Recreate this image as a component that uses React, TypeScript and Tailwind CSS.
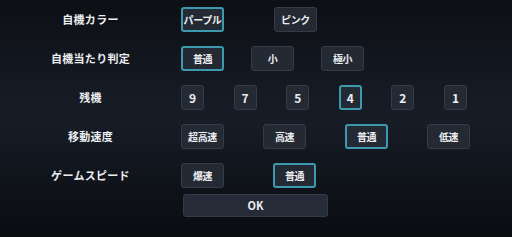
import React from "react";

type Row = {
  label: string;
  options: string[];
  selected: number;
  width: string;
  gap: string;
};

const rows: Row[] = [
  { label: "自機カラー", options: ["パープル", "ピンク"], selected: 0, width: "w-[43px]", gap: "gap-[50px]" },
  { label: "自機当たり判定", options: ["普通", "小", "極小"], selected: 0, width: "w-[43px]", gap: "gap-[27px]" },
  { label: "残機", options: ["9", "7", "5", "4", "2", "1"], selected: 3, width: "w-[23px]", gap: "gap-[29.6px]" },
  { label: "移動速度", options: ["超高速", "高速", "普通", "低速"], selected: 2, width: "w-[43px]", gap: "gap-[39px]" },
  { label: "ゲームスピード", options: ["爆速", "普通"], selected: 1, width: "w-[43px]", gap: "gap-[49px]" },
];

function OptionButton({ text, active, width }: { text: string; active: boolean; width: string }) {
  const isNumber = /^\d$/.test(text);
  return (
    <button
      className={`${width} h-[25px] flex items-center justify-center whitespace-nowrap rounded-[3px] bg-[#242a34] font-bold text-[#eceef2] ${
        isNumber ? "text-[12px]" : "text-[10px] tracking-[-0.4px]"
      } ${active ? "border-2 border-[#3d9aae]" : "border border-[#353c47]"}`}
    >
      {text}
    </button>
  );
}

export default function App() {
  return (
    <div
      className="w-[512px] h-[237px] overflow-hidden bg-[linear-gradient(180deg,#0d0f14_0%,#141922_35%,#171d27_50%,#10141b_75%,#0a0c10_100%)] pt-[7px]"
      style={{ fontFamily: '"Noto Sans CJK JP", "Noto Sans", sans-serif' }}
    >
      <div className="flex flex-col gap-[14px]">
        {rows.map((row) => (
          <div key={row.label} className="flex items-center h-[25px]">
            <div className="w-[181px] text-center text-[11px] font-bold text-[#eceef2] tracking-[0.3px]">
              {row.label}
            </div>
            <div className={`flex ${row.gap}`}>
              {row.options.map((opt, i) => (
                <OptionButton key={opt + i} text={opt} active={i === row.selected} width={row.width} />
              ))}
            </div>
          </div>
        ))}
      </div>
      <div className="flex mt-[6px] pl-[183px]">
        <button className="w-[145px] h-[23px] flex items-center justify-center rounded-[3px] bg-[#252b37] border border-[#343b47] text-[11px] font-bold text-[#eceef2]">
          OK
        </button>
      </div>
    </div>
  );
}
